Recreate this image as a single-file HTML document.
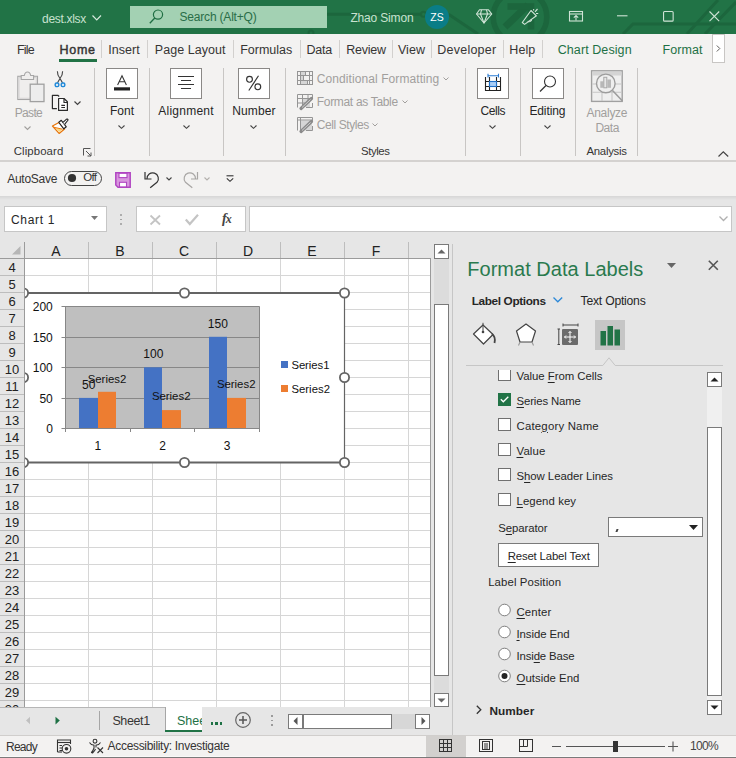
<!DOCTYPE html>
<html><head><meta charset="utf-8">
<style>
*{margin:0;padding:0;box-sizing:border-box}
html,body{width:736px;height:758px;overflow:hidden;background:#f3f2f1;font-family:"Liberation Sans",sans-serif;color:#262626;position:relative}
.a{position:absolute;white-space:nowrap}
svg{position:absolute;overflow:visible}
</style></head><body>
<div class="a" style="left:0px;top:0px;width:736px;height:34px;background:#217346"></div>
<svg style="left:0px;top:0px;" width="736" height="34" viewBox="0 0 736 34"><g stroke="#1c663d" stroke-width="3" fill="none"><path d="M327 14.3 L421 14.3"/><circle cx="423.5" cy="14.3" r="2.5" stroke-width="2"/><path d="M448.6 14.3 L478 34"/><circle cx="311" cy="33" r="2.5" stroke-width="2"/><circle cx="520" cy="17" r="26.8" stroke-width="5.6"/><path d="M505 27 L528 5" stroke-width="7"/><path d="M507.5 6.5 L531 6.5 L531 29.5" stroke-width="6.5"/><path d="M623 34 L633 24 L736 24"/><path d="M687 34 L718 0"/><path d="M705 34 L736 2"/></g></svg>
<span class="a" style="left:42.00px;top:12.84px;font-size:12px;line-height:12px;color:#c8e2d0;letter-spacing:-0.298px;">dest.xlsx</span>
<svg style="left:92px;top:14.5px;" width="10" height="6" viewBox="0 0 10 6"><path d="M0.5 0.5 L4.75 5 L9 0.5" stroke="#d6e9dd" stroke-width="1.2" fill="none"/></svg>
<div class="a" style="left:130px;top:6px;width:197px;height:22px;background:#a3d1b3"></div>
<svg style="left:149px;top:10px;" width="15" height="14" viewBox="0 0 15 14"><circle cx="9" cy="4.6" r="4.6" stroke="#1f6e43" stroke-width="1.2" fill="none"/><path d="M5.8 8 L0.8 13.2" stroke="#1f6e43" stroke-width="1.3"/></svg>
<span class="a" style="left:179.50px;top:11.04px;font-size:12px;line-height:12px;color:#2a6e48;letter-spacing:-0.192px;">Search (Alt+Q)</span>
<span class="a" style="left:350.40px;top:12.24px;font-size:12px;line-height:12px;color:#c8e2d0;letter-spacing:-0.169px;">Zhao Simon</span>
<svg style="left:425px;top:5px;" width="24" height="24" viewBox="0 0 24 24"><circle cx="12" cy="12" r="12" fill="#0a7d87"/></svg>
<span class="a" style="left:430.29px;top:12.11px;font-size:10.5px;line-height:10.5px;color:#ffffff;">ZS</span>
<svg style="left:476px;top:9px;" width="17" height="15" viewBox="0 0 17 15"><g stroke="#cfe3d6" stroke-width="1.1" fill="none" stroke-linejoin="round"><path d="M3.5 0.8 L12.5 0.8 L15.8 5 L8 14 L0.5 5 Z"/><path d="M0.5 5 L15.8 5"/><path d="M5.5 0.8 L4.5 5 L8 14 L11.5 5 L10.5 0.8"/></g></svg>
<svg style="left:515px;top:4px;" width="30" height="26" viewBox="0 0 30 26"><g stroke="#cfe3d6" stroke-width="1.15" fill="none" stroke-linejoin="round"><path d="M7.3 18.5 L16 6.5 L21.4 11.8 L9.6 20.4 Z"/><path d="M12.8 17.2 A2.3 2.3 0 0 0 16.5 15"/><path d="M18.5 5.2 L18.8 6.5 M20 7.8 L22.5 5 M21 9.5 L23.2 9.5"/></g></svg>
<svg style="left:569px;top:11px;" width="14" height="11" viewBox="0 0 14 11"><g stroke="#cfe3d6" stroke-width="1.1" fill="none"><rect x="0.5" y="0.5" width="13" height="9.5"/><path d="M0.5 3 L13.5 3"/><path d="M7 9.5 L7 4.5 M4.8 6.7 L7 4.5 L9.2 6.7"/></g></svg>
<svg style="left:617px;top:15px;" width="11" height="2" viewBox="0 0 11 2"><path d="M0 0.8 L10.5 0.8" stroke="#cfe3d6" stroke-width="1.1"/></svg>
<svg style="left:663px;top:11px;" width="11" height="11" viewBox="0 0 11 11"><rect x="0.55" y="0.55" width="9.6" height="9.6" rx="1" stroke="#cfe3d6" stroke-width="1.1" fill="none"/></svg>
<svg style="left:709px;top:11px;" width="11" height="11" viewBox="0 0 11 11"><path d="M0.5 0.5 L10.2 10.2 M10.2 0.5 L0.5 10.2" stroke="#cfe3d6" stroke-width="1.1"/></svg>
<div class="a" style="left:0px;top:34px;width:736px;height:30px;background:#f3f2f1"></div>
<span class="a" style="left:17.00px;top:44.42px;font-size:12.5px;line-height:12.5px;color:#363534;letter-spacing:-0.785px;">File</span>
<span class="a" style="left:59.40px;top:44.42px;font-size:12.5px;line-height:12.5px;color:#363534;letter-spacing:0.765px;-webkit-text-stroke:0.45px #363534;">Home</span>
<div class="a" style="left:59px;top:59px;width:38px;height:3px;background:#217346"></div>
<div class="a" style="left:101px;top:40px;width:1px;height:18px;background:#d2d0ce"></div>
<div class="a" style="left:147px;top:40px;width:1px;height:18px;background:#d2d0ce"></div>
<div class="a" style="left:233px;top:40px;width:1px;height:18px;background:#d2d0ce"></div>
<div class="a" style="left:300px;top:40px;width:1px;height:18px;background:#d2d0ce"></div>
<div class="a" style="left:339px;top:40px;width:1px;height:18px;background:#d2d0ce"></div>
<div class="a" style="left:392px;top:40px;width:1px;height:18px;background:#d2d0ce"></div>
<div class="a" style="left:431px;top:40px;width:1px;height:18px;background:#d2d0ce"></div>
<div class="a" style="left:503px;top:40px;width:1px;height:18px;background:#d2d0ce"></div>
<div class="a" style="left:542px;top:40px;width:1px;height:18px;background:#d2d0ce"></div>
<span class="a" style="left:108.20px;top:44.42px;font-size:12.5px;line-height:12.5px;color:#363534;letter-spacing:0.057px;">Insert</span>
<span class="a" style="left:154.80px;top:44.42px;font-size:12.5px;line-height:12.5px;color:#363534;letter-spacing:0.046px;">Page Layout</span>
<span class="a" style="left:240.20px;top:44.42px;font-size:12.5px;line-height:12.5px;color:#363534;letter-spacing:-0.011px;">Formulas</span>
<span class="a" style="left:306.40px;top:44.42px;font-size:12.5px;line-height:12.5px;color:#363534;letter-spacing:-0.176px;">Data</span>
<span class="a" style="left:346.30px;top:44.42px;font-size:12.5px;line-height:12.5px;color:#363534;letter-spacing:-0.264px;">Review</span>
<span class="a" style="left:397.90px;top:44.42px;font-size:12.5px;line-height:12.5px;color:#363534;letter-spacing:0.083px;">View</span>
<span class="a" style="left:437.30px;top:44.42px;font-size:12.5px;line-height:12.5px;color:#363534;letter-spacing:0.225px;">Developer</span>
<span class="a" style="left:509.30px;top:44.42px;font-size:12.5px;line-height:12.5px;color:#363534;letter-spacing:0.073px;">Help</span>
<span class="a" style="left:557.70px;top:44.42px;font-size:12.5px;line-height:12.5px;color:#1e7145;letter-spacing:0.088px;">Chart Design</span>
<span class="a" style="left:662.40px;top:44.42px;font-size:12.5px;line-height:12.5px;color:#1e7145;letter-spacing:0.103px;">Format</span>
<div class="a" style="left:712px;top:34px;width:13px;height:29px;background:#fff;border:1px solid #c8c6c4"></div>
<svg style="left:716px;top:45px;" width="5" height="7" viewBox="0 0 5 7"><path d="M0.8 0.5 L3.8 3.5 L0.8 6.5" stroke="#605e5c" stroke-width="1" fill="none"/></svg>
<div class="a" style="left:0px;top:160px;width:736px;height:2px;background:#d4d2d0"></div>
<div class="a" style="left:94px;top:68px;width:1px;height:88px;background:#c8c6c4"></div>
<div class="a" style="left:149px;top:68px;width:1px;height:88px;background:#c8c6c4"></div>
<div class="a" style="left:223px;top:68px;width:1px;height:88px;background:#c8c6c4"></div>
<div class="a" style="left:285px;top:68px;width:1px;height:88px;background:#c8c6c4"></div>
<div class="a" style="left:465px;top:68px;width:1px;height:88px;background:#c8c6c4"></div>
<div class="a" style="left:520px;top:68px;width:1px;height:88px;background:#c8c6c4"></div>
<div class="a" style="left:575px;top:68px;width:1px;height:88px;background:#c8c6c4"></div>
<div class="a" style="left:637px;top:68px;width:1px;height:88px;background:#c8c6c4"></div>
<svg style="left:17px;top:71px;" width="28" height="32" viewBox="0 0 28 32"><rect x="0.8" y="5.3" width="19.7" height="23.2" fill="#efeeed" stroke="#a6a6a6" stroke-width="1.1"/><rect x="2" y="6.5" width="17.3" height="20.8" fill="none" stroke="#d9d8d7" stroke-width="1.2"/><path d="M4.2 4.5 L7.3 4.5 Q8 1 10.5 1 Q13 1 13.7 4.5 L16.6 4.5 L16.6 8.5 L4.2 8.5 Z" fill="#efeeed" stroke="#a6a6a6" stroke-width="1.1"/><rect x="13.2" y="13.2" width="13.8" height="17.4" fill="#ededed" stroke="#a0a0a0" stroke-width="1.3"/></svg>
<span class="a" style="left:14.70px;top:107.04px;font-size:12px;line-height:12px;color:#a19f9d;letter-spacing:-0.657px;">Paste</span>
<svg style="left:24px;top:126px;" width="8" height="5" viewBox="0 0 8 5"><path d="M0.5 0.5 L3.5 3.5 L6.5 0.5" stroke="#a19f9d" stroke-width="1.1" fill="none"/></svg>
<svg style="left:54px;top:71px;" width="12" height="17" viewBox="0 0 12 17"><g stroke="#444" stroke-width="1.1" fill="none"><path d="M3.4 0.3 Q3.2 4 6 7.5 L3.5 11.8 M8.6 0.3 Q8.8 4 6 7.5 L8.5 11.8"/></g><g stroke="#1e88d8" stroke-width="1.4" fill="#d8e8f5"><rect x="1.2" y="12" width="3.6" height="3.6" rx="1.3"/><rect x="7.2" y="12" width="3.6" height="3.6" rx="1.3"/></g></svg>
<svg style="left:51px;top:94px;" width="18" height="18" viewBox="0 0 18 18"><g stroke="#2b2b2b" stroke-width="1.2" fill="none" stroke-linejoin="round"><path d="M5.9 14.6 L1.4 14.6 L1.4 1.3 L6.8 1.3 L8.2 2.5"/><path d="M7.6 4.5 L13 4.5 L16.4 7.8 L16.4 16.4 L7.6 16.4 Z" fill="#fff"/><path d="M13 4.5 L13 8.5 L16.4 8.5"/><path d="M10.3 11.4 L14 11.4 M10.3 13.5 L14 13.5"/></g></svg>
<svg style="left:74px;top:101px;" width="8" height="5" viewBox="0 0 8 5"><path d="M0.5 0.5 L3.5 3.5 L6.5 0.5" stroke="#444" stroke-width="1.2" fill="none"/></svg>
<svg style="left:52px;top:118px;" width="17" height="17" viewBox="0 0 17 17"><path d="M0.5 8 L7.4 4.3 L12.5 11 L7.1 15.4 Z" fill="#fff" stroke="#e8760b" stroke-width="1.3" stroke-linejoin="round"/><path d="M3.5 10 L10.3 11.5 L7.2 14 Z" fill="#fbd77a"/><path d="M2 9.3 L10.5 11.2" stroke="#e8760b" stroke-width="1"/><path d="M6.8 4.3 L9.3 2.3 L14.3 8.8 L11.8 10.8 Z" fill="#fff" stroke="#222" stroke-width="1.1" stroke-linejoin="round"/><path d="M10.7 4.6 L14.3 1.3 Q15.6 0.6 16.1 2 L12.6 6.4" fill="#fff" stroke="#222" stroke-width="1.1" stroke-linejoin="round"/></svg>
<span class="a" style="left:13.70px;top:145.95px;font-size:11.4px;line-height:11.4px;color:#363534;letter-spacing:0.101px;">Clipboard</span>
<svg style="left:83px;top:148px;" width="9" height="9" viewBox="0 0 9 9"><g stroke="#555" stroke-width="1" fill="none"><path d="M0.5 7.5 L0.5 0.5 L7.5 0.5"/><path d="M3 3 L8 8 M8 4.5 L8 8 L4.5 8"/></g></svg>
<div class="a" style="left:106px;top:68px;width:32px;height:31px;background:#fff;border:1px solid #8a8886"></div>
<span class="a" style="left:110.00px;top:105.04px;font-size:12px;line-height:12px;color:#262626;letter-spacing:-0.002px;">Font</span>
<svg style="left:118px;top:125px;" width="7" height="4" viewBox="0 0 7 4"><path d="M0.5 0.5 L3.5 3.3 L6.5 0.5" stroke="#444" stroke-width="1.1" fill="none"/></svg>
<div class="a" style="left:170px;top:68px;width:32px;height:31px;background:#fff;border:1px solid #8a8886"></div>
<span class="a" style="left:158.30px;top:105.04px;font-size:12px;line-height:12px;color:#262626;letter-spacing:0.238px;">Alignment</span>
<svg style="left:183px;top:125px;" width="7" height="4" viewBox="0 0 7 4"><path d="M0.5 0.5 L3.5 3.3 L6.5 0.5" stroke="#444" stroke-width="1.1" fill="none"/></svg>
<div class="a" style="left:238px;top:68px;width:32px;height:31px;background:#fff;border:1px solid #8a8886"></div>
<span class="a" style="left:232.20px;top:105.04px;font-size:12px;line-height:12px;color:#262626;letter-spacing:0.137px;">Number</span>
<svg style="left:250px;top:125px;" width="7" height="4" viewBox="0 0 7 4"><path d="M0.5 0.5 L3.5 3.3 L6.5 0.5" stroke="#444" stroke-width="1.1" fill="none"/></svg>
<div class="a" style="left:477px;top:68px;width:32px;height:31px;background:#fff;border:1px solid #8a8886"></div>
<span class="a" style="left:480.50px;top:105.04px;font-size:12px;line-height:12px;color:#262626;letter-spacing:-0.434px;">Cells</span>
<svg style="left:489px;top:125px;" width="7" height="4" viewBox="0 0 7 4"><path d="M0.5 0.5 L3.5 3.3 L6.5 0.5" stroke="#444" stroke-width="1.1" fill="none"/></svg>
<div class="a" style="left:532px;top:68px;width:32px;height:31px;background:#fff;border:1px solid #8a8886"></div>
<span class="a" style="left:529.40px;top:105.04px;font-size:12px;line-height:12px;color:#262626;letter-spacing:-0.099px;">Editing</span>
<svg style="left:544px;top:125px;" width="7" height="4" viewBox="0 0 7 4"><path d="M0.5 0.5 L3.5 3.3 L6.5 0.5" stroke="#444" stroke-width="1.1" fill="none"/></svg>
<svg style="left:114px;top:73px;" width="17" height="20" viewBox="0 0 17 20"><path d="M3.6 12 L8 2.8 L12.4 12 M5.2 8.8 L10.8 8.8" stroke="#333" stroke-width="1.05" fill="none"/><rect x="0" y="14.3" width="16" height="3.2" fill="#222"/></svg>
<svg style="left:177px;top:76px;" width="18" height="14" viewBox="0 0 18 14"><g stroke="#333" stroke-width="1.1"><path d="M1 0.5 L17 0.5 M4 4.5 L14 4.5 M1 8.5 L17 8.5 M4 12.5 L14 12.5"/></g></svg>
<svg style="left:244px;top:74px;" width="18" height="18" viewBox="0 0 18 18"><g stroke="#333" stroke-width="1.15" fill="none"><circle cx="5.5" cy="5.3" r="2.9"/><circle cx="13.8" cy="12.8" r="2.9"/><path d="M14.5 1.8 L4.8 16.5"/></g></svg>
<svg style="left:297px;top:71px;" width="16" height="14" viewBox="0 0 16 14"><rect x="4" y="1" width="4.5" height="3.5" fill="#d6d6d6"/><rect x="4" y="5" width="2.5" height="4.5" fill="#d6d6d6"/><rect x="4" y="10" width="6.5" height="3.5" fill="#d6d6d6"/><g stroke="#959595" stroke-width="1" fill="none"><rect x="0.5" y="0.5" width="15" height="13"/><path d="M0.5 4.5 L15.5 4.5 M0.5 9.5 L15.5 9.5 M3.5 0.5 L3.5 13.5 M12.5 0.5 L12.5 13.5 M8.5 0.5 L8.5 4.5 M6.5 4.5 L6.5 9.5 M10.5 9.5 L10.5 13.5"/></g></svg>
<svg style="left:297px;top:94px;" width="17" height="15" viewBox="0 0 17 15"><rect x="6" y="5" width="7" height="8" fill="#d6d6d6"/><g stroke="#959595" stroke-width="1" fill="none"><path d="M0.5 13.5 L0.5 0.5 L15.5 0.5 L15.5 5 M15.5 9 L15.5 13.5 L9 13.5"/><path d="M0.5 4.5 L15.5 4.5 M0.5 9 L8 9 M5.5 0.5 L5.5 13 M11 0.5 L11 7"/></g><path d="M4 14.5 L14.5 4.5" stroke="#8a8a8a" stroke-width="3.2" stroke-linecap="round"/><path d="M5 13.5 L13.5 5.5" stroke="#d0d0d0" stroke-width="1"/></svg>
<svg style="left:297px;top:117px;" width="17" height="15" viewBox="0 0 17 15"><rect x="4" y="3.5" width="11" height="10" fill="#d6d6d6"/><g stroke="#959595" stroke-width="1" fill="none"><path d="M0.5 13.5 L0.5 0.5 L15.5 0.5 L15.5 4 M15.5 9 L15.5 13.5 L9 13.5"/><path d="M0.5 3 L15.5 3 M3.5 0.5 L3.5 13.5"/></g><path d="M4 14.5 L14.5 4.5" stroke="#8a8a8a" stroke-width="3.2" stroke-linecap="round"/><path d="M5 13.5 L13.5 5.5" stroke="#d0d0d0" stroke-width="1"/></svg>
<span class="a" style="left:316.80px;top:72.84px;font-size:12px;line-height:12px;color:#a19f9d;letter-spacing:0.081px;">Conditional Formatting</span>
<span class="a" style="left:316.80px;top:96.14px;font-size:12px;line-height:12px;color:#a19f9d;letter-spacing:-0.321px;">Format as Table</span>
<span class="a" style="left:316.80px;top:118.54px;font-size:12px;line-height:12px;color:#a19f9d;letter-spacing:-0.426px;">Cell Styles</span>
<svg style="left:443px;top:76.5px;" width="7" height="4" viewBox="0 0 7 4"><path d="M0.5 0.5 L3 3 L5.5 0.5" stroke="#a19f9d" stroke-width="1" fill="none"/></svg>
<svg style="left:402px;top:99.5px;" width="7" height="4" viewBox="0 0 7 4"><path d="M0.5 0.5 L3 3 L5.5 0.5" stroke="#a19f9d" stroke-width="1" fill="none"/></svg>
<svg style="left:372px;top:122.5px;" width="7" height="4" viewBox="0 0 7 4"><path d="M0.5 0.5 L3 3 L5.5 0.5" stroke="#a19f9d" stroke-width="1" fill="none"/></svg>
<span class="a" style="left:361.00px;top:145.95px;font-size:11.4px;line-height:11.4px;color:#363534;letter-spacing:-0.407px;">Styles</span>
<svg style="left:484px;top:73px;" width="18" height="20" viewBox="0 0 18 20"><g stroke="#2b7cd3" stroke-width="1.1"><path d="M4 2.7 L14.5 2.7 M4 0.8 L4 4.6 M14.5 0.8 L14.5 4.6"/></g><g stroke="#222" stroke-width="1.1" fill="none"><path d="M1.5 4 L1.5 17.5 L16.5 17.5 L16.5 4 M5.5 4 L5.5 17.5 M12.5 4 L12.5 17.5 M1.5 8.5 L16.5 8.5 M1.5 13.5 L16.5 13.5"/></g><rect x="5.5" y="8.5" width="7" height="5" fill="#a8cdf5" stroke="#1e6fc8" stroke-width="1.1"/></svg>
<svg style="left:539px;top:75px;" width="18" height="18" viewBox="0 0 18 18"><circle cx="11" cy="6.5" r="5.5" stroke="#333" stroke-width="1.1" fill="none"/><path d="M7 10.5 L1 16.5" stroke="#333" stroke-width="1.3"/></svg>
<svg style="left:590px;top:70px;" width="34" height="33" viewBox="0 0 34 33"><rect x="1.6" y="0.8" width="30.6" height="30.6" fill="#efefef" stroke="#a0a0a0" stroke-width="1.4"/><rect x="2.3" y="1.5" width="29.2" height="4" fill="#d4d4d4"/><g stroke="#c6c6c6" stroke-width="1.1"><path d="M2.3 14 L31.5 14 M2.3 22.3 L31.5 22.3 M12 5.5 L12 31 M22 5.5 L22 31"/></g><circle cx="15.8" cy="13.4" r="9.3" fill="#efefef" stroke="#9c9c9c" stroke-width="1.4"/><path d="M22.5 20.5 L32.5 31" stroke="#9c9c9c" stroke-width="1.5"/><rect x="10.3" y="11.3" width="3.2" height="6.5" fill="#b8b8b8"/><rect x="13.8" y="7.3" width="3" height="10.5" fill="#e6e6e6" stroke="#a8a8a8" stroke-width="1"/><rect x="17.3" y="9.5" width="3.7" height="8.3" fill="#b8b8b8"/></svg>
<span class="a" style="left:586.50px;top:106.84px;font-size:12px;line-height:12px;color:#a19f9d;letter-spacing:-0.284px;">Analyze</span>
<span class="a" style="left:595.40px;top:121.84px;font-size:12px;line-height:12px;color:#a19f9d;letter-spacing:-0.437px;">Data</span>
<span class="a" style="left:586.50px;top:145.95px;font-size:11.4px;line-height:11.4px;color:#363534;letter-spacing:-0.281px;">Analysis</span>
<svg style="left:718px;top:151px;" width="11" height="6" viewBox="0 0 11 6"><path d="M0.5 5.5 L5.3 0.8 L10.2 5.5" stroke="#444" stroke-width="1.2" fill="none"/></svg>
<span class="a" style="left:7.20px;top:172.84px;font-size:12px;line-height:12px;color:#363534;letter-spacing:-0.254px;">AutoSave</span>
<div class="a" style="left:64px;top:171px;width:38px;height:15px;border:1px solid #444;border-radius:8px"></div>
<svg style="left:67px;top:173px;" width="10" height="10" viewBox="0 0 10 10"><circle cx="5" cy="5" r="4.1" fill="#333"/></svg>
<span class="a" style="left:83.20px;top:172.47px;font-size:11.5px;line-height:11.5px;color:#363534;letter-spacing:-0.709px;">Off</span>
<svg style="left:115px;top:172px;" width="17" height="16" viewBox="0 0 17 16"><path d="M0.8 0.8 L15.2 0.8 L15.2 15.2 L3 15.2 L0.8 13 Z" fill="#d896de" stroke="#b146c2" stroke-width="1.5"/><rect x="4" y="1.3" width="8" height="4.3" fill="#fff" stroke="#b146c2" stroke-width="1.1"/><rect x="4.5" y="10.3" width="7" height="4.6" fill="#fff" stroke="#b146c2" stroke-width="1.1"/></svg>
<svg style="left:144px;top:170px;" width="17" height="19" viewBox="0 0 17 19"><g stroke="#333" stroke-width="1.2" fill="none"><path d="M3 9 A5.7 5.7 0 1 1 13 12.3 L6.2 17.8"/><path d="M1 2 L1 9 L7.5 9"/></g></svg>
<svg style="left:166px;top:177px;" width="7" height="4" viewBox="0 0 7 4"><path d="M0.5 0.5 L3 3 L5.5 0.5" stroke="#444" stroke-width="1.1" fill="none"/></svg>
<svg style="left:182px;top:170px;" width="17" height="19" viewBox="0 0 17 19"><g transform="translate(16.5 0) scale(-1 1)" stroke="#a8a6a4" stroke-width="1.2" fill="none"><path d="M3 9 A5.7 5.7 0 1 1 13 12.3 L6.2 17.8"/><path d="M1 2 L1 9 L7.5 9"/></g></svg>
<svg style="left:204px;top:177px;" width="7" height="4" viewBox="0 0 7 4"><path d="M0.5 0.5 L3 3 L5.5 0.5" stroke="#b3b0ad" stroke-width="1.1" fill="none"/></svg>
<svg style="left:226px;top:175px;" width="8" height="8" viewBox="0 0 8 8"><path d="M0.5 0.8 L7.5 0.8" stroke="#333" stroke-width="1.1"/><path d="M0.8 3.3 L4 6.3 L7.2 3.3" stroke="#333" stroke-width="1.1" fill="none"/></svg>
<div class="a" style="left:0px;top:196px;width:736px;height:46px;background:#e6e6e6"></div>
<div class="a" style="left:0px;top:196px;width:736px;height:4px;background:linear-gradient(#d6d6d6,#e6e6e6)"></div>
<div class="a" style="left:4px;top:206px;width:103px;height:26px;background:#fff;border:1px solid #c6c6c6"></div>
<span class="a" style="left:11.00px;top:214.34px;font-size:12px;line-height:12px;color:#262626;letter-spacing:0.664px;">Chart 1</span>
<svg style="left:91px;top:216px;" width="8" height="5" viewBox="0 0 8 5"><path d="M0 0 L7 0 L3.5 4 Z" fill="#777"/></svg>
<div class="a" style="left:120px;top:214px;width:1.6px;height:1.6px;background:#9a9a9a;border-radius:1px"></div>
<div class="a" style="left:120px;top:218.5px;width:1.6px;height:1.6px;background:#9a9a9a;border-radius:1px"></div>
<div class="a" style="left:120px;top:223px;width:1.6px;height:1.6px;background:#9a9a9a;border-radius:1px"></div>
<div class="a" style="left:136px;top:206px;width:110px;height:26px;background:#fff;border:1px solid #c6c6c6"></div>
<svg style="left:150px;top:215px;" width="11" height="10" viewBox="0 0 11 10"><path d="M0.5 0.5 L10 9.5 M10 0.5 L0.5 9.5" stroke="#c4c4c4" stroke-width="1.8"/></svg>
<svg style="left:185px;top:214px;" width="14" height="11" viewBox="0 0 14 11"><path d="M0.8 5.5 L4.8 10 L13 0.8" stroke="#c4c4c4" stroke-width="2.2" fill="none"/></svg>
<span class="a" style="left:222px;top:211px;font-family:'Liberation Serif',serif;font-style:italic;font-weight:bold;font-size:14px;line-height:16px;color:#444">f<span style="font-size:12px;margin-left:-1px">x</span></span>
<div class="a" style="left:249px;top:206px;width:483px;height:26px;background:#fff;border:1px solid #c6c6c6"></div>
<svg style="left:719px;top:216px;" width="9" height="6" viewBox="0 0 9 6"><path d="M0.5 0.5 L4.5 4.5 L8.5 0.5" stroke="#b0b0b0" stroke-width="1.3" fill="none"/></svg>
<div class="a" style="left:0px;top:242px;width:453px;height:17px;background:#e6e6e6"></div>
<div class="a" style="left:0px;top:258px;width:431px;height:1px;background:#9b9b9b"></div>
<div class="a" style="left:24px;top:242px;width:1px;height:17px;background:#bdbdbd"></div>
<svg style="left:12px;top:246px;" width="9" height="9" viewBox="0 0 9 9"><path d="M8.5 0 L8.5 8.5 L0 8.5 Z" fill="#b6b6b6"/></svg>
<span class="a" style="left:51.33px;top:243.55px;font-size:14px;line-height:14px;color:#222;">A</span>
<div class="a" style="left:88px;top:242px;width:1px;height:16px;background:#bdbdbd"></div>
<span class="a" style="left:115.33px;top:243.55px;font-size:14px;line-height:14px;color:#222;">B</span>
<div class="a" style="left:152px;top:242px;width:1px;height:16px;background:#bdbdbd"></div>
<span class="a" style="left:178.94px;top:243.55px;font-size:14px;line-height:14px;color:#222;">C</span>
<div class="a" style="left:216px;top:242px;width:1px;height:16px;background:#bdbdbd"></div>
<span class="a" style="left:242.94px;top:243.55px;font-size:14px;line-height:14px;color:#222;">D</span>
<div class="a" style="left:280px;top:242px;width:1px;height:16px;background:#bdbdbd"></div>
<span class="a" style="left:307.33px;top:243.55px;font-size:14px;line-height:14px;color:#222;">E</span>
<div class="a" style="left:344px;top:242px;width:1px;height:16px;background:#bdbdbd"></div>
<span class="a" style="left:371.72px;top:243.55px;font-size:14px;line-height:14px;color:#222;">F</span>
<div class="a" style="left:408px;top:242px;width:1px;height:16px;background:#bdbdbd"></div>
<div class="a" style="left:0px;top:259px;width:431px;height:448px;background:#fff"></div>
<div class="a" style="left:0px;top:259px;width:24px;height:448px;background:#e6e6e6"></div>
<div class="a" style="left:24px;top:242px;width:1px;height:465px;background:#9b9b9b"></div>
<div class="a" style="left:0px;top:275px;width:24px;height:1px;background:#bdbdbd"></div>
<div class="a" style="left:25px;top:275px;width:405px;height:1px;background:#d6d6d6"></div>
<div class="a" style="left:0px;top:292px;width:24px;height:1px;background:#bdbdbd"></div>
<div class="a" style="left:25px;top:292px;width:405px;height:1px;background:#d6d6d6"></div>
<div class="a" style="left:0px;top:309px;width:24px;height:1px;background:#bdbdbd"></div>
<div class="a" style="left:25px;top:309px;width:405px;height:1px;background:#d6d6d6"></div>
<div class="a" style="left:0px;top:326px;width:24px;height:1px;background:#bdbdbd"></div>
<div class="a" style="left:25px;top:326px;width:405px;height:1px;background:#d6d6d6"></div>
<div class="a" style="left:0px;top:343px;width:24px;height:1px;background:#bdbdbd"></div>
<div class="a" style="left:25px;top:343px;width:405px;height:1px;background:#d6d6d6"></div>
<div class="a" style="left:0px;top:360px;width:24px;height:1px;background:#bdbdbd"></div>
<div class="a" style="left:25px;top:360px;width:405px;height:1px;background:#d6d6d6"></div>
<div class="a" style="left:0px;top:377px;width:24px;height:1px;background:#bdbdbd"></div>
<div class="a" style="left:25px;top:377px;width:405px;height:1px;background:#d6d6d6"></div>
<div class="a" style="left:0px;top:394px;width:24px;height:1px;background:#bdbdbd"></div>
<div class="a" style="left:25px;top:394px;width:405px;height:1px;background:#d6d6d6"></div>
<div class="a" style="left:0px;top:411px;width:24px;height:1px;background:#bdbdbd"></div>
<div class="a" style="left:25px;top:411px;width:405px;height:1px;background:#d6d6d6"></div>
<div class="a" style="left:0px;top:428px;width:24px;height:1px;background:#bdbdbd"></div>
<div class="a" style="left:25px;top:428px;width:405px;height:1px;background:#d6d6d6"></div>
<div class="a" style="left:0px;top:445px;width:24px;height:1px;background:#bdbdbd"></div>
<div class="a" style="left:25px;top:445px;width:405px;height:1px;background:#d6d6d6"></div>
<div class="a" style="left:0px;top:462px;width:24px;height:1px;background:#bdbdbd"></div>
<div class="a" style="left:25px;top:462px;width:405px;height:1px;background:#d6d6d6"></div>
<div class="a" style="left:0px;top:479px;width:24px;height:1px;background:#bdbdbd"></div>
<div class="a" style="left:25px;top:479px;width:405px;height:1px;background:#d6d6d6"></div>
<div class="a" style="left:0px;top:496px;width:24px;height:1px;background:#bdbdbd"></div>
<div class="a" style="left:25px;top:496px;width:405px;height:1px;background:#d6d6d6"></div>
<div class="a" style="left:0px;top:513px;width:24px;height:1px;background:#bdbdbd"></div>
<div class="a" style="left:25px;top:513px;width:405px;height:1px;background:#d6d6d6"></div>
<div class="a" style="left:0px;top:530px;width:24px;height:1px;background:#bdbdbd"></div>
<div class="a" style="left:25px;top:530px;width:405px;height:1px;background:#d6d6d6"></div>
<div class="a" style="left:0px;top:547px;width:24px;height:1px;background:#bdbdbd"></div>
<div class="a" style="left:25px;top:547px;width:405px;height:1px;background:#d6d6d6"></div>
<div class="a" style="left:0px;top:564px;width:24px;height:1px;background:#bdbdbd"></div>
<div class="a" style="left:25px;top:564px;width:405px;height:1px;background:#d6d6d6"></div>
<div class="a" style="left:0px;top:581px;width:24px;height:1px;background:#bdbdbd"></div>
<div class="a" style="left:25px;top:581px;width:405px;height:1px;background:#d6d6d6"></div>
<div class="a" style="left:0px;top:598px;width:24px;height:1px;background:#bdbdbd"></div>
<div class="a" style="left:25px;top:598px;width:405px;height:1px;background:#d6d6d6"></div>
<div class="a" style="left:0px;top:615px;width:24px;height:1px;background:#bdbdbd"></div>
<div class="a" style="left:25px;top:615px;width:405px;height:1px;background:#d6d6d6"></div>
<div class="a" style="left:0px;top:632px;width:24px;height:1px;background:#bdbdbd"></div>
<div class="a" style="left:25px;top:632px;width:405px;height:1px;background:#d6d6d6"></div>
<div class="a" style="left:0px;top:649px;width:24px;height:1px;background:#bdbdbd"></div>
<div class="a" style="left:25px;top:649px;width:405px;height:1px;background:#d6d6d6"></div>
<div class="a" style="left:0px;top:666px;width:24px;height:1px;background:#bdbdbd"></div>
<div class="a" style="left:25px;top:666px;width:405px;height:1px;background:#d6d6d6"></div>
<div class="a" style="left:0px;top:683px;width:24px;height:1px;background:#bdbdbd"></div>
<div class="a" style="left:25px;top:683px;width:405px;height:1px;background:#d6d6d6"></div>
<div class="a" style="left:0px;top:700px;width:24px;height:1px;background:#bdbdbd"></div>
<div class="a" style="left:25px;top:700px;width:405px;height:1px;background:#d6d6d6"></div>
<div class="a" style="left:88px;top:259px;width:1px;height:448px;background:#d6d6d6"></div>
<div class="a" style="left:152px;top:259px;width:1px;height:448px;background:#d6d6d6"></div>
<div class="a" style="left:216px;top:259px;width:1px;height:448px;background:#d6d6d6"></div>
<div class="a" style="left:280px;top:259px;width:1px;height:448px;background:#d6d6d6"></div>
<div class="a" style="left:344px;top:259px;width:1px;height:448px;background:#d6d6d6"></div>
<div class="a" style="left:408px;top:259px;width:1px;height:448px;background:#d6d6d6"></div>
<span class="a" style="left:8.39px;top:261.00px;font-size:13px;line-height:13px;color:#222;">4</span>
<span class="a" style="left:8.39px;top:278.00px;font-size:13px;line-height:13px;color:#222;">5</span>
<span class="a" style="left:8.39px;top:295.00px;font-size:13px;line-height:13px;color:#222;">6</span>
<span class="a" style="left:8.39px;top:312.00px;font-size:13px;line-height:13px;color:#222;">7</span>
<span class="a" style="left:8.39px;top:329.00px;font-size:13px;line-height:13px;color:#222;">8</span>
<span class="a" style="left:8.39px;top:346.00px;font-size:13px;line-height:13px;color:#222;">9</span>
<span class="a" style="left:4.77px;top:363.00px;font-size:13px;line-height:13px;color:#222;">10</span>
<span class="a" style="left:5.25px;top:380.00px;font-size:13px;line-height:13px;color:#222;">11</span>
<span class="a" style="left:4.77px;top:397.00px;font-size:13px;line-height:13px;color:#222;">12</span>
<span class="a" style="left:4.77px;top:414.00px;font-size:13px;line-height:13px;color:#222;">13</span>
<span class="a" style="left:4.77px;top:431.00px;font-size:13px;line-height:13px;color:#222;">14</span>
<span class="a" style="left:4.77px;top:448.00px;font-size:13px;line-height:13px;color:#222;">15</span>
<span class="a" style="left:4.77px;top:465.00px;font-size:13px;line-height:13px;color:#222;">16</span>
<span class="a" style="left:4.77px;top:482.00px;font-size:13px;line-height:13px;color:#222;">17</span>
<span class="a" style="left:4.77px;top:499.00px;font-size:13px;line-height:13px;color:#222;">18</span>
<span class="a" style="left:4.77px;top:516.00px;font-size:13px;line-height:13px;color:#222;">19</span>
<span class="a" style="left:4.77px;top:533.00px;font-size:13px;line-height:13px;color:#222;">20</span>
<span class="a" style="left:4.77px;top:550.00px;font-size:13px;line-height:13px;color:#222;">21</span>
<span class="a" style="left:4.77px;top:567.00px;font-size:13px;line-height:13px;color:#222;">22</span>
<span class="a" style="left:4.77px;top:584.00px;font-size:13px;line-height:13px;color:#222;">23</span>
<span class="a" style="left:4.77px;top:601.00px;font-size:13px;line-height:13px;color:#222;">24</span>
<span class="a" style="left:4.77px;top:618.00px;font-size:13px;line-height:13px;color:#222;">25</span>
<span class="a" style="left:4.77px;top:635.00px;font-size:13px;line-height:13px;color:#222;">26</span>
<span class="a" style="left:4.77px;top:652.00px;font-size:13px;line-height:13px;color:#222;">27</span>
<span class="a" style="left:4.77px;top:669.00px;font-size:13px;line-height:13px;color:#222;">28</span>
<span class="a" style="left:4.77px;top:686.00px;font-size:13px;line-height:13px;color:#222;">29</span>
<span class="a" style="left:4.77px;top:703.00px;font-size:13px;line-height:13px;color:#222;">30</span>
<div class="a" style="left:430px;top:258px;width:1px;height:449px;background:#9b9b9b"></div>
<div class="a" style="left:431px;top:242px;width:22px;height:465px;background:#e6e6e6"></div>
<div class="a" style="left:25px;top:293px;width:320px;height:169px;background:#fff"></div>
<svg style="left:0px;top:0px;" width="736" height="758" viewBox="0 0 736 758"><rect x="65.5" y="306.5" width="194.0" height="122.0" fill="#bfbfbf"/><path d="M61.5 306.5 L259.5 306.5" stroke="#878787" stroke-width="1"/><path d="M61.5 337.5 L259.5 337.5" stroke="#878787" stroke-width="1"/><path d="M61.5 367.5 L259.5 367.5" stroke="#878787" stroke-width="1"/><path d="M61.5 398.5 L259.5 398.5" stroke="#878787" stroke-width="1"/><path d="M61.5 428.5 L260.0 428.5" stroke="#878787" stroke-width="1"/><path d="M65.5 306.5 L65.5 432" stroke="#878787" stroke-width="1"/><path d="M259.5 306.5 L259.5 432" stroke="#878787" stroke-width="1"/><path d="M130.5 428 L130.5 432" stroke="#878787" stroke-width="1"/><path d="M194.5 428 L194.5 432" stroke="#878787" stroke-width="1"/><rect x="79" y="397.9" width="19.0" height="30.1" fill="#4472c4"/><rect x="98" y="391.8" width="18.0" height="36.2" fill="#ed7d31"/><rect x="144" y="367.3" width="18.0" height="60.7" fill="#4472c4"/><rect x="162" y="410.1" width="19.0" height="17.9" fill="#ed7d31"/><rect x="209" y="336.8" width="18.0" height="91.2" fill="#4472c4"/><rect x="227" y="397.9" width="19.0" height="30.1" fill="#ed7d31"/></svg>
<span class="a" style="left:32.78px;top:301.14px;font-size:12px;line-height:12px;color:#111;">200</span>
<span class="a" style="left:32.78px;top:331.84px;font-size:12px;line-height:12px;color:#111;">150</span>
<span class="a" style="left:32.78px;top:362.34px;font-size:12px;line-height:12px;color:#111;">100</span>
<span class="a" style="left:39.45px;top:392.84px;font-size:12px;line-height:12px;color:#111;">50</span>
<span class="a" style="left:46.13px;top:423.34px;font-size:12px;line-height:12px;color:#111;">0</span>
<span class="a" style="left:94.50px;top:439.84px;font-size:12px;line-height:12px;color:#111;">1</span>
<span class="a" style="left:159.16px;top:439.84px;font-size:12px;line-height:12px;color:#111;">2</span>
<span class="a" style="left:223.83px;top:439.84px;font-size:12px;line-height:12px;color:#111;">3</span>
<span class="a" style="left:82.00px;top:378.84px;font-size:12px;line-height:12px;color:#111;">50</span>
<span class="a" style="left:143.30px;top:347.74px;font-size:12px;line-height:12px;color:#111;">100</span>
<span class="a" style="left:207.80px;top:317.54px;font-size:12px;line-height:12px;color:#111;">150</span>
<span class="a" style="left:87.70px;top:373.65px;font-size:11.4px;line-height:11.4px;color:#111;letter-spacing:-0.007px;">Series2</span>
<span class="a" style="left:151.90px;top:390.85px;font-size:11.4px;line-height:11.4px;color:#111;letter-spacing:-0.007px;">Series2</span>
<span class="a" style="left:216.90px;top:379.35px;font-size:11.4px;line-height:11.4px;color:#111;letter-spacing:-0.007px;">Series2</span>
<div class="a" style="left:281px;top:361px;width:7px;height:7px;background:#4472c4"></div>
<div class="a" style="left:281px;top:385px;width:7px;height:7px;background:#ed7d31"></div>
<span class="a" style="left:291.40px;top:359.93px;font-size:11.3px;line-height:11.3px;color:#111;letter-spacing:-0.045px;">Series1</span>
<span class="a" style="left:291.40px;top:383.73px;font-size:11.3px;line-height:11.3px;color:#111;letter-spacing:0.041px;">Series2</span>
<svg style="left:0px;top:0px;" width="736" height="758" viewBox="0 0 736 758"><path d="M20 293 L344.5 293" stroke="#646464" stroke-width="2"/><path d="M20 462.5 L344.5 462.5" stroke="#646464" stroke-width="1.8"/><path d="M344.5 292 L344.5 463.5" stroke="#646464" stroke-width="1.2"/><circle cx="23.5" cy="293" r="4.6" fill="#fff" stroke="#646464" stroke-width="1.8"/><circle cx="23.5" cy="377.5" r="4.6" fill="#fff" stroke="#646464" stroke-width="1.8"/><circle cx="23.5" cy="462.5" r="4.6" fill="#fff" stroke="#646464" stroke-width="1.8"/><circle cx="184.5" cy="293" r="4.6" fill="#fff" stroke="#646464" stroke-width="1.8"/><circle cx="184.5" cy="462.5" r="4.6" fill="#fff" stroke="#646464" stroke-width="1.8"/><circle cx="344.5" cy="293" r="4.6" fill="#fff" stroke="#646464" stroke-width="1.8"/><circle cx="344.5" cy="377.5" r="4.6" fill="#fff" stroke="#646464" stroke-width="1.8"/><circle cx="344.5" cy="462.5" r="4.6" fill="#fff" stroke="#646464" stroke-width="1.8"/></svg>
<div class="a" style="left:0px;top:259px;width:24px;height:448px;background:#e6e6e6"></div>
<div class="a" style="left:0px;top:275px;width:24px;height:1px;background:#bdbdbd"></div>
<div class="a" style="left:0px;top:292px;width:24px;height:1px;background:#bdbdbd"></div>
<div class="a" style="left:0px;top:309px;width:24px;height:1px;background:#bdbdbd"></div>
<div class="a" style="left:0px;top:326px;width:24px;height:1px;background:#bdbdbd"></div>
<div class="a" style="left:0px;top:343px;width:24px;height:1px;background:#bdbdbd"></div>
<div class="a" style="left:0px;top:360px;width:24px;height:1px;background:#bdbdbd"></div>
<div class="a" style="left:0px;top:377px;width:24px;height:1px;background:#bdbdbd"></div>
<div class="a" style="left:0px;top:394px;width:24px;height:1px;background:#bdbdbd"></div>
<div class="a" style="left:0px;top:411px;width:24px;height:1px;background:#bdbdbd"></div>
<div class="a" style="left:0px;top:428px;width:24px;height:1px;background:#bdbdbd"></div>
<div class="a" style="left:0px;top:445px;width:24px;height:1px;background:#bdbdbd"></div>
<div class="a" style="left:0px;top:462px;width:24px;height:1px;background:#bdbdbd"></div>
<div class="a" style="left:0px;top:479px;width:24px;height:1px;background:#bdbdbd"></div>
<div class="a" style="left:0px;top:496px;width:24px;height:1px;background:#bdbdbd"></div>
<div class="a" style="left:0px;top:513px;width:24px;height:1px;background:#bdbdbd"></div>
<div class="a" style="left:0px;top:530px;width:24px;height:1px;background:#bdbdbd"></div>
<div class="a" style="left:0px;top:547px;width:24px;height:1px;background:#bdbdbd"></div>
<div class="a" style="left:0px;top:564px;width:24px;height:1px;background:#bdbdbd"></div>
<div class="a" style="left:0px;top:581px;width:24px;height:1px;background:#bdbdbd"></div>
<div class="a" style="left:0px;top:598px;width:24px;height:1px;background:#bdbdbd"></div>
<div class="a" style="left:0px;top:615px;width:24px;height:1px;background:#bdbdbd"></div>
<div class="a" style="left:0px;top:632px;width:24px;height:1px;background:#bdbdbd"></div>
<div class="a" style="left:0px;top:649px;width:24px;height:1px;background:#bdbdbd"></div>
<div class="a" style="left:0px;top:666px;width:24px;height:1px;background:#bdbdbd"></div>
<div class="a" style="left:0px;top:683px;width:24px;height:1px;background:#bdbdbd"></div>
<div class="a" style="left:0px;top:700px;width:24px;height:1px;background:#bdbdbd"></div>
<span class="a" style="left:8.39px;top:261.00px;font-size:13px;line-height:13px;color:#222;">4</span>
<span class="a" style="left:8.39px;top:278.00px;font-size:13px;line-height:13px;color:#222;">5</span>
<span class="a" style="left:8.39px;top:295.00px;font-size:13px;line-height:13px;color:#222;">6</span>
<span class="a" style="left:8.39px;top:312.00px;font-size:13px;line-height:13px;color:#222;">7</span>
<span class="a" style="left:8.39px;top:329.00px;font-size:13px;line-height:13px;color:#222;">8</span>
<span class="a" style="left:8.39px;top:346.00px;font-size:13px;line-height:13px;color:#222;">9</span>
<span class="a" style="left:4.77px;top:363.00px;font-size:13px;line-height:13px;color:#222;">10</span>
<span class="a" style="left:5.25px;top:380.00px;font-size:13px;line-height:13px;color:#222;">11</span>
<span class="a" style="left:4.77px;top:397.00px;font-size:13px;line-height:13px;color:#222;">12</span>
<span class="a" style="left:4.77px;top:414.00px;font-size:13px;line-height:13px;color:#222;">13</span>
<span class="a" style="left:4.77px;top:431.00px;font-size:13px;line-height:13px;color:#222;">14</span>
<span class="a" style="left:4.77px;top:448.00px;font-size:13px;line-height:13px;color:#222;">15</span>
<span class="a" style="left:4.77px;top:465.00px;font-size:13px;line-height:13px;color:#222;">16</span>
<span class="a" style="left:4.77px;top:482.00px;font-size:13px;line-height:13px;color:#222;">17</span>
<span class="a" style="left:4.77px;top:499.00px;font-size:13px;line-height:13px;color:#222;">18</span>
<span class="a" style="left:4.77px;top:516.00px;font-size:13px;line-height:13px;color:#222;">19</span>
<span class="a" style="left:4.77px;top:533.00px;font-size:13px;line-height:13px;color:#222;">20</span>
<span class="a" style="left:4.77px;top:550.00px;font-size:13px;line-height:13px;color:#222;">21</span>
<span class="a" style="left:4.77px;top:567.00px;font-size:13px;line-height:13px;color:#222;">22</span>
<span class="a" style="left:4.77px;top:584.00px;font-size:13px;line-height:13px;color:#222;">23</span>
<span class="a" style="left:4.77px;top:601.00px;font-size:13px;line-height:13px;color:#222;">24</span>
<span class="a" style="left:4.77px;top:618.00px;font-size:13px;line-height:13px;color:#222;">25</span>
<span class="a" style="left:4.77px;top:635.00px;font-size:13px;line-height:13px;color:#222;">26</span>
<span class="a" style="left:4.77px;top:652.00px;font-size:13px;line-height:13px;color:#222;">27</span>
<span class="a" style="left:4.77px;top:669.00px;font-size:13px;line-height:13px;color:#222;">28</span>
<span class="a" style="left:4.77px;top:686.00px;font-size:13px;line-height:13px;color:#222;">29</span>
<span class="a" style="left:4.77px;top:703.00px;font-size:13px;line-height:13px;color:#222;">30</span>
<div class="a" style="left:0px;top:707px;width:453px;height:28px;background:#e6e6e6"></div>
<div class="a" style="left:24px;top:259px;width:1px;height:448px;background:#9b9b9b"></div>
<div class="a" style="left:434px;top:259px;width:15px;height:448px;background:#dcdcdc"></div>
<div class="a" style="left:434px;top:244px;width:15px;height:15px;background:#fff;border:1px solid #7a7a7a"></div>
<svg style="left:437px;top:249px;" width="9" height="5" viewBox="0 0 9 5"><path d="M0.5 4.5 L4.5 0.5 L8.5 4.5 Z" fill="#666"/></svg>
<div class="a" style="left:434px;top:304px;width:15px;height:372px;background:#fff;border:1px solid #7a7a7a"></div>
<div class="a" style="left:434px;top:693px;width:15px;height:14px;background:#fff;border:1px solid #7a7a7a"></div>
<svg style="left:437px;top:698px;" width="9" height="5" viewBox="0 0 9 5"><path d="M0.5 0.5 L4.5 4.5 L8.5 0.5 Z" fill="#666"/></svg>
<div class="a" style="left:452px;top:244px;width:1px;height:491px;background:#c6c6c6"></div>
<div class="a" style="left:0px;top:707px;width:165px;height:1px;background:#b6b6b6"></div>
<svg style="left:25px;top:716px;" width="6" height="9" viewBox="0 0 6 9"><path d="M5 0.8 L1 4.5 L5 8.2 Z" fill="#c0c0c0"/></svg>
<svg style="left:54.5px;top:716px;" width="6" height="9" viewBox="0 0 6 9"><path d="M0.5 0.8 L4.8 4.6 L0.5 8.5 Z" fill="#1e7145"/></svg>
<div class="a" style="left:99px;top:711px;width:1px;height:19px;background:#a6a6a6"></div>
<span class="a" style="left:112.40px;top:715.42px;font-size:12.5px;line-height:12.5px;color:#363534;letter-spacing:-0.369px;">Sheet1</span>
<div class="a" style="left:165px;top:707px;width:37px;height:25px;background:#fff"></div>
<div class="a" style="left:165px;top:707px;width:1px;height:25px;background:#a6a6a6"></div>
<div class="a" style="left:165px;top:730px;width:37px;height:2px;background:#217346"></div>
<div class="a" style="left:165px;top:708px;width:37px;height:22px;overflow:hidden"><span class="a" style="left:12px;top:6px;font-size:12.5px;line-height:14px;color:#1e7145">Sheet2</span></div>
<div class="a" style="left:210.5px;top:722px;width:2.5px;height:2.5px;background:#1e7145"></div>
<div class="a" style="left:215px;top:722px;width:2.5px;height:2.5px;background:#1e7145"></div>
<div class="a" style="left:219.5px;top:722px;width:2.5px;height:2.5px;background:#1e7145"></div>
<svg style="left:235px;top:711px;" width="18" height="18" viewBox="0 0 18 18"><circle cx="8" cy="9" r="7.3" stroke="#666" stroke-width="1.2" fill="none"/><path d="M8 5 L8 13 M4 9 L12 9" stroke="#555" stroke-width="1.5"/></svg>
<div class="a" style="left:271px;top:715px;width:1.6px;height:1.6px;background:#9a9a9a"></div>
<div class="a" style="left:271px;top:719.5px;width:1.6px;height:1.6px;background:#9a9a9a"></div>
<div class="a" style="left:271px;top:724px;width:1.6px;height:1.6px;background:#9a9a9a"></div>
<div class="a" style="left:288px;top:714px;width:15px;height:15px;background:#fff;border:1px solid #7a7a7a"></div>
<svg style="left:293px;top:717px;" width="5" height="8" viewBox="0 0 5 8"><path d="M4.5 0 L0.5 4 L4.5 8 Z" fill="#555"/></svg>
<div class="a" style="left:303px;top:714px;width:89px;height:15px;background:#fff;border:1px solid #7a7a7a"></div>
<div class="a" style="left:392px;top:714px;width:24px;height:15px;background:#d7d7d7"></div>
<div class="a" style="left:415px;top:714px;width:15px;height:15px;background:#fff;border:1px solid #7a7a7a"></div>
<svg style="left:421px;top:717px;" width="5" height="8" viewBox="0 0 5 8"><path d="M0.5 0 L4.5 4 L0.5 8 Z" fill="#555"/></svg>
<div class="a" style="left:0px;top:735px;width:736px;height:23px;background:#f3f2f1"></div>
<div class="a" style="left:0px;top:735px;width:736px;height:1px;background:#d0cecc"></div>
<div class="a" style="left:0px;top:756px;width:736px;height:1px;background:#faf9f8"></div>
<div class="a" style="left:0px;top:757px;width:736px;height:1px;background:#7a7a7a"></div>
<span class="a" style="left:6.00px;top:740.84px;font-size:12px;line-height:12px;color:#363534;letter-spacing:-0.737px;">Ready</span>
<svg style="left:56px;top:739px;" width="17" height="15" viewBox="0 0 17 15"><g stroke="#333" stroke-width="1.1" fill="none"><path d="M1.5 13 L1.5 1 L14.5 1 L14.5 5"/><path d="M1.5 3.5 L14.5 3.5"/><path d="M3.5 6.5 L6 6.5 M3.5 9 L6 9 M3.5 11.5 L6 11.5"/><path d="M1.5 13 L6 13"/><circle cx="10.5" cy="9.8" r="4.3" fill="#f3f2f1"/><circle cx="10.5" cy="9.8" r="1.8" fill="#333" stroke="none"/></g></svg>
<svg style="left:88px;top:738px;" width="17" height="16" viewBox="0 0 17 16"><g stroke="#333" stroke-width="1.1" fill="none" stroke-linejoin="round"><circle cx="7" cy="3.2" r="1.9"/><path d="M1.5 4.5 Q3.5 7.5 6 7 L6 10 Q5 13 3.5 14.5 L4.5 15 Q7 12.5 7.5 11"/><path d="M12.5 4.5 Q10.5 7.5 8 7 L8 9.5"/></g><path d="M9.5 9.5 L15 15 M15 9.5 L9.5 15" stroke="#333" stroke-width="1.1"/></svg>
<span class="a" style="left:107.60px;top:740.34px;font-size:12px;line-height:12px;color:#363534;letter-spacing:-0.317px;">Accessibility: Investigate</span>
<div class="a" style="left:426px;top:736px;width:40px;height:21px;background:#d2d0ce"></div>
<svg style="left:439px;top:739px;" width="13" height="13" viewBox="0 0 13 13"><g stroke="#333" stroke-width="1" fill="none"><rect x="0.5" y="0.5" width="12" height="12"/><path d="M0.5 4.5 L12.5 4.5 M0.5 8.5 L12.5 8.5 M4.5 0.5 L4.5 12.5 M8.5 0.5 L8.5 12.5"/></g></svg>
<svg style="left:479px;top:739px;" width="14" height="13" viewBox="0 0 14 13"><g stroke="#333" stroke-width="1" fill="none"><rect x="0.5" y="0.5" width="13" height="12"/><rect x="3.5" y="2.5" width="7" height="8"/><path d="M5 5 L9 5 M5 7 L9 7 M5 9 L9 9"/></g></svg>
<svg style="left:519px;top:739px;" width="14" height="13" viewBox="0 0 14 13"><g stroke="#333" stroke-width="1" fill="none"><rect x="0.5" y="0.5" width="13" height="12"/><path d="M4.5 0.5 L4.5 7.5 M8.5 0.5 L8.5 7.5 L0.5 7.5"/></g></svg>
<div class="a" style="left:552px;top:746px;width:9px;height:1.2px;background:#555"></div>
<div class="a" style="left:566px;top:746px;width:99px;height:1px;background:#555"></div>
<div class="a" style="left:613px;top:741px;width:5px;height:11px;background:#333"></div>
<svg style="left:668px;top:741px;" width="11" height="11" viewBox="0 0 11 11"><path d="M0 5.5 L10 5.5 M5 0.5 L5 10.5" stroke="#555" stroke-width="1.1"/></svg>
<span class="a" style="left:690.00px;top:740.34px;font-size:12px;line-height:12px;color:#444;letter-spacing:-0.673px;">100%</span>
<div class="a" style="left:453px;top:242px;width:283px;height:493px;background:#e6e6e6"></div>
<span class="a" style="left:467.30px;top:258.87px;font-size:20px;line-height:20px;color:#2a7a4e;letter-spacing:0.021px;">Format Data Labels</span>
<svg style="left:667px;top:263px;" width="9" height="6" viewBox="0 0 9 6"><path d="M0 0 L9 0 L4.5 5 Z" fill="#666"/></svg>
<svg style="left:708px;top:260px;" width="11" height="11" viewBox="0 0 11 11"><path d="M0.8 0.8 L9.8 9.8 M9.8 0.8 L0.8 9.8" stroke="#555" stroke-width="1.6"/></svg>
<span class="a" style="left:471.70px;top:295.71px;font-size:11.8px;line-height:11.8px;color:#262626;font-weight:bold;letter-spacing:-0.359px;">Label Options</span>
<svg style="left:553px;top:297px;" width="10" height="6" viewBox="0 0 10 6"><path d="M0.5 0.5 L4.8 4.8 L9.2 0.5" stroke="#2b88d8" stroke-width="1.3" fill="none"/></svg>
<span class="a" style="left:580.60px;top:295.37px;font-size:12.2px;line-height:12.2px;color:#262626;letter-spacing:-0.234px;">Text Options</span>
<svg style="left:472px;top:322px;" width="25" height="24" viewBox="0 0 25 24"><path d="M1.5 12 L11 3 L21 12.5 L11.5 22 Z" fill="#fff" stroke="#444" stroke-width="1.2" stroke-linejoin="round"/><path d="M11 3 L11 0.8" stroke="#444" stroke-width="1"/><circle cx="11" cy="10" r="1.3" fill="#444"/><path d="M11 10 L11 3" stroke="#444" stroke-width="1"/><path d="M20 12 Q24 15 22.5 21" stroke="#444" stroke-width="1.8" fill="none"/></svg>
<svg style="left:515px;top:323px;" width="22" height="23" viewBox="0 0 22 23"><path d="M11 1 L20.5 8 L17 19 L5 19 L1.5 8 Z" fill="#fff" stroke="#444" stroke-width="1.2" stroke-linejoin="round"/><path d="M5 19 L3.5 22.5 M17 19 L18.5 22.5" stroke="#999" stroke-width="1.1"/></svg>
<svg style="left:557px;top:324px;" width="23" height="22" viewBox="0 0 23 22"><path d="M6 1 L21 1 M6 -0.5 L6 2.5 M21 -0.5 L21 2.5" stroke="#444" stroke-width="1"/><path d="M0.5 5 L3 5 M1.8 5 L1.8 20.5 M0.5 20.5 L3 20.5" stroke="#444" stroke-width="1"/><rect x="5" y="5" width="16" height="16" rx="1" fill="#6b6b6b"/><path d="M13 7.5 L13 18.5 M7.5 13 L18.5 13 M11.5 9 L13 7.5 L14.5 9 M11.5 17 L13 18.5 L14.5 17 M9 11.5 L7.5 13 L9 14.5 M17 11.5 L18.5 13 L17 14.5" stroke="#fff" stroke-width="1" fill="none"/></svg>
<div class="a" style="left:595px;top:320px;width:30px;height:30px;background:#c6c6c6"></div>
<svg style="left:600px;top:324px;" width="21" height="22" viewBox="0 0 21 22"><rect x="0.5" y="7" width="5.5" height="14.5" fill="#217346"/><rect x="7.5" y="2" width="5.5" height="19.5" fill="#217346"/><rect x="14.5" y="5.5" width="5.5" height="16" fill="#217346"/></svg>
<svg style="left:465px;top:355px;" width="260" height="12" viewBox="0 0 260 12"><path d="M1 10.5 L137.8 10.5 L144 2.8 L150.2 10.5 L258 10.5" stroke="#c6c6c6" stroke-width="1" fill="#e6e6e6"/></svg>
<div class="a" style="left:453px;top:370px;width:283px;height:330px;overflow:hidden">
<div class="a" style="left:45px;top:-2px;width:13px;height:13px;background:#fff;border:1px solid #707070"></div>
<span class="a" style="left:63.50px;top:0.55px;font-size:11.4px;line-height:11.4px;color:#262626;letter-spacing:-0.036px;text-decoration-thickness:1px;text-underline-offset:2px">Value <u>F</u>rom Cells</span>
<div class="a" style="left:45px;top:23px;width:13px;height:13px;background:#217346;border:1px solid #217346"></div>
<svg style="left:47px;top:26px" width="9" height="7"><path d="M0.8 3.3 L3.3 5.8 L8.3 0.8" stroke="#fff" stroke-width="1.3" fill="none"/></svg>
<span class="a" style="left:63.50px;top:25.55px;font-size:11.4px;line-height:11.4px;color:#262626;letter-spacing:-0.144px;text-decoration-thickness:1px;text-underline-offset:2px"><u>S</u>eries Name</span>
<div class="a" style="left:45px;top:48px;width:13px;height:13px;background:#fff;border:1px solid #707070"></div>
<span class="a" style="left:63.50px;top:50.55px;font-size:11.4px;line-height:11.4px;color:#262626;letter-spacing:0.198px;text-decoration-thickness:1px;text-underline-offset:2px">Cate<u>g</u>ory Name</span>
<div class="a" style="left:45px;top:73px;width:13px;height:13px;background:#fff;border:1px solid #707070"></div>
<span class="a" style="left:63.50px;top:75.55px;font-size:11.4px;line-height:11.4px;color:#262626;letter-spacing:0.138px;text-decoration-thickness:1px;text-underline-offset:2px"><u>V</u>alue</span>
<div class="a" style="left:45px;top:98px;width:13px;height:13px;background:#fff;border:1px solid #707070"></div>
<span class="a" style="left:63.50px;top:100.55px;font-size:11.4px;line-height:11.4px;color:#262626;letter-spacing:-0.064px;text-decoration-thickness:1px;text-underline-offset:2px">S<u>h</u>ow Leader Lines</span>
<div class="a" style="left:45px;top:123px;width:13px;height:13px;background:#fff;border:1px solid #707070"></div>
<span class="a" style="left:63.50px;top:125.55px;font-size:11.4px;line-height:11.4px;color:#262626;letter-spacing:0.066px;text-decoration-thickness:1px;text-underline-offset:2px"><u>L</u>egend key</span>
<span class="a" style="left:45.20px;top:152.65px;font-size:11.4px;line-height:11.4px;color:#262626;letter-spacing:-0.084px;text-decoration-thickness:1px;text-underline-offset:2px">S<u>e</u>parator</span>
<div class="a" style="left:155px;top:147px;width:95px;height:20px;background:#fff;border:1px solid #7a7a7a"></div>
<div class="a" style="left:163px;top:159px;width:1.5px;height:3px;background:#444;transform:skewX(-20deg)"></div>
<svg style="left:236px;top:155px" width="9" height="5"><path d="M0 0 L9 0 L4.5 5 Z" fill="#222"/></svg>
<div class="a" style="left:45px;top:173px;width:101px;height:24px;background:#fff;border:1px solid #7a7a7a"></div>
<span class="a" style="left:54.70px;top:180.65px;font-size:11.4px;line-height:11.4px;color:#262626;letter-spacing:-0.169px;text-decoration-thickness:1px;text-underline-offset:2px"><u>R</u>eset Label Text</span>
<span class="a" style="left:35.20px;top:206.75px;font-size:11.4px;line-height:11.4px;color:#262626;letter-spacing:0.099px;text-decoration-thickness:1px;text-underline-offset:2px">Label Position</span>
<svg style="left:45px;top:233px" width="14" height="14"><circle cx="6.5" cy="7" r="5.8" fill="#fff" stroke="#808080" stroke-width="1"/></svg>
<span class="a" style="left:63.50px;top:237.15px;font-size:11.4px;line-height:11.4px;color:#262626;letter-spacing:0.131px;text-decoration-thickness:1px;text-underline-offset:2px"><u>C</u>enter</span>
<svg style="left:45px;top:255px" width="14" height="14"><circle cx="6.5" cy="7" r="5.8" fill="#fff" stroke="#808080" stroke-width="1"/></svg>
<span class="a" style="left:63.50px;top:259.15px;font-size:11.4px;line-height:11.4px;color:#262626;letter-spacing:-0.087px;text-decoration-thickness:1px;text-underline-offset:2px"><u>I</u>nside End</span>
<svg style="left:45px;top:277px" width="14" height="14"><circle cx="6.5" cy="7" r="5.8" fill="#fff" stroke="#808080" stroke-width="1"/></svg>
<span class="a" style="left:63.50px;top:281.15px;font-size:11.4px;line-height:11.4px;color:#262626;letter-spacing:-0.143px;text-decoration-thickness:1px;text-underline-offset:2px">Insi<u>d</u>e Base</span>
<svg style="left:45px;top:299px" width="14" height="14"><circle cx="6.5" cy="7" r="5.8" fill="#fff" stroke="#808080" stroke-width="1"/><circle cx="6.5" cy="7" r="3" fill="#222"/></svg>
<span class="a" style="left:63.50px;top:303.15px;font-size:11.4px;line-height:11.4px;color:#262626;letter-spacing:0.024px;text-decoration-thickness:1px;text-underline-offset:2px"><u>O</u>utside End</span>
</div>
<div class="a" style="left:707px;top:372px;width:15px;height:343px;background:#f0f0f0"></div>
<div class="a" style="left:707px;top:372px;width:15px;height:15px;background:#fff;border:1px solid #7a7a7a"></div>
<svg style="left:710px;top:377px;" width="9" height="5" viewBox="0 0 9 5"><path d="M0.5 4.5 L4.5 0.5 L8.5 4.5 Z" fill="#222"/></svg>
<div class="a" style="left:707px;top:427px;width:15px;height:269px;background:#fff;border:1px solid #7a7a7a"></div>
<div class="a" style="left:707px;top:700px;width:15px;height:15px;background:#fff;border:1px solid #7a7a7a"></div>
<svg style="left:710px;top:705px;" width="9" height="5" viewBox="0 0 9 5"><path d="M0.5 0.5 L4.5 4.5 L8.5 0.5 Z" fill="#222"/></svg>
<svg style="left:476px;top:705px;" width="6" height="10" viewBox="0 0 6 10"><path d="M0.8 0.8 L4.8 4.8 L0.8 8.8" stroke="#333" stroke-width="1.3" fill="none"/></svg>
<span class="a" style="left:489.40px;top:706.01px;font-size:11.8px;line-height:11.8px;color:#262626;font-weight:bold;letter-spacing:0.069px;">Number</span>
</body></html>
